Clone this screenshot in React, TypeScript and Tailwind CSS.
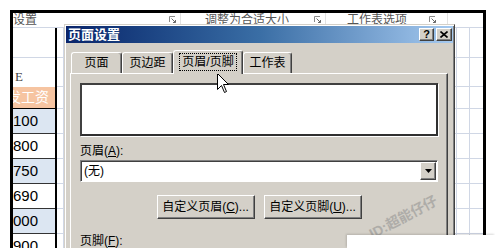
import React from "react";

// Win2000-style 3D edges
const raised =
  "border border-t-white border-l-white border-r-[#404040] border-b-[#404040] shadow-[inset_-1px_-1px_#808080]";
const sunken =
  "border border-t-[#808080] border-l-[#808080] border-r-white border-b-white shadow-[inset_1px_1px_#404040]";

const rows = [
  { v: "100", blue: true },
  { v: "800", blue: false },
  { v: "750", blue: true },
  { v: "690", blue: false },
  { v: "000", blue: true },
  { v: "900", blue: false },
];

function Launcher() {
  return (
    <svg width="8" height="8" viewBox="0 0 8 8" className="shrink-0">
      <path d="M0.5 6V0.5H6" fill="none" stroke="#8a8a8a" />
      <path d="M2.5 2.5L6.5 6.5M4 6.5H6.5V4" fill="none" stroke="#6a6a6a" />
    </svg>
  );
}

function SheetRow({
  h,
  children,
  cellClass = "",
}: {
  h: string;
  children?: React.ReactNode;
  cellClass?: string;
}) {
  return (
    <div className={`flex ${h} shrink-0`}>
      <div className={`w-[42px] overflow-hidden ${cellClass}`}>{children}</div>
      <div className="w-[2px] bg-black" />
      <div className="w-[7px] border-r border-b border-[#d0d7e5]" />
      <div className="w-[393px] border-r border-b border-[#d0d7e5]" />
      <div className="w-[13px] border-r border-b border-[#d0d7e5]" />
      <div className="flex-1 border-b border-[#d0d7e5]" />
    </div>
  );
}

function Tab({ w, children }: { w: string; children: React.ReactNode }) {
  return (
    <div
      className={`${w} h-[21px] flex items-center justify-center rounded-t-[3px] border-t border-l border-r border-t-white border-l-white border-r-[#404040] shadow-[inset_-1px_0_#808080]`}
    >
      {children}
    </div>
  );
}

export default function App() {
  return (
    <div className="relative w-[495px] h-[248px] overflow-hidden bg-white pl-[10px] pt-[10px] font-['Liberation_Sans','Noto_Sans_CJK_SC',sans-serif]">
      {/* spreadsheet behind the dialog */}
      <div className="w-[476px] h-[270px] border-[3px] border-b-0 border-black flex flex-col">
        <div className="flex h-[15px] shrink-0 border-b border-[#d0d7e5] text-[12px] leading-[14px] text-[#555]">
          <div className="w-[167px] flex items-center justify-between pr-[3px]">
            <span>设置</span>
            <Launcher />
          </div>
          <div className="w-[145px] flex items-center justify-between pl-[24px] pr-[3px] border-l border-[#e2e2e2]">
            <span>调整为合适大小</span>
            <Launcher />
          </div>
          <div className="w-[122px] flex items-center justify-between pl-[21px] pr-[10px] border-l border-[#e2e2e2]">
            <span>工作表选项</span>
            <Launcher />
          </div>
          <div className="flex-1 border-l border-[#e2e2e2]" />
        </div>
        <SheetRow h="h-[30px]" cellClass="border-b border-[#d0d7e5]" />
        <SheetRow
          h="h-[29px]"
          cellClass="flex items-end pl-[2px] pb-[1px] text-[13px] text-[#444] font-['Liberation_Serif',serif]"
        >
          E
        </SheetRow>
        <SheetRow
          h="h-[22px]"
          cellClass="bg-[#f6c4a1] flex items-center text-white text-[14px] border-b border-black"
        >
          <span className="whitespace-nowrap -ml-[6px]">发工资</span>
        </SheetRow>
        {rows.map((r) => (
          <SheetRow
            key={r.v}
            h="h-[25px]"
            cellClass={`flex items-center text-[15px] text-black border-b border-[#333] ${
              r.blue ? "bg-[#dce6f2]" : "bg-white"
            }`}
          >
            {r.v}
          </SheetRow>
        ))}
      </div>

      {/* page setup dialog (window over the sheet) */}
      <div className="absolute left-[64px] top-[24px] w-[391px] h-[240px] bg-[#d4d0c8] border border-t-[#d4d0c8] border-l-[#d4d0c8] border-r-[#404040] border-b-[#404040] shadow-[inset_1px_1px_#fff,inset_-1px_-1px_#808080] p-[1px] text-[12px] text-black">
        <div className="h-[17px] flex items-center pl-[2px] pr-[1px] bg-gradient-to-r from-[#0a246a] via-[#3a6ea5] to-[#a6caf0]">
          <span className="text-white font-bold text-[13px] leading-none">页面设置</span>
          <div className="ml-auto flex gap-[2px]">
            <div className={`w-[15px] h-[13px] bg-[#d4d0c8] flex items-center justify-center text-[11px] font-bold leading-none ${raised}`}>
              ?
            </div>
            <div className={`w-[16px] h-[13px] bg-[#d4d0c8] flex items-center justify-center ${raised}`}>
              <svg width="8" height="7" viewBox="0 0 8 7">
                <path d="M0.5 0.5L7.5 6.5M7.5 0.5L0.5 6.5" stroke="black" strokeWidth="1.6" />
              </svg>
            </div>
          </div>
        </div>

        <div className="pt-[7px] pl-[4px]">
          <div className="flex items-end h-[23px] pl-[1px]">
            <Tab w="w-[51px]">页面</Tab>
            <Tab w="w-[51px]">页边距</Tab>
            <div className="relative z-10 -mb-px w-[70px] h-[24px] pb-[2px] flex items-center justify-center rounded-t-[3px] bg-[#d4d0c8] border-t border-l border-r border-t-white border-l-white border-r-[#404040] shadow-[inset_-1px_0_#808080]">
              <span className="border border-dotted border-black px-[2px] leading-[16px]">页眉/页脚</span>
            </div>
            <Tab w="w-[49px]">工作表</Tab>
          </div>

          <div className="w-[378px] h-[200px] border-t border-l border-r border-t-white border-l-white border-r-[#404040] shadow-[inset_-1px_0_#808080] pt-[9px] pl-[9px]">
            <div className="w-[358px] h-[53px] bg-white border-2 border-t-[#404040] border-l-[#404040] border-r-[#303030] border-b-[#303030] shadow-[1px_1px_#fff]" />

            <div className="mt-[9px] h-[13px] leading-[13px]">
              页眉(<span className="underline">A</span>):
            </div>

            <div className={`mt-[2px] w-[358px] h-[22px] bg-white flex items-center ${sunken}`}>
              <span className="pl-[3px]">(无)</span>
              <div className={`ml-auto mr-[1px] w-[16px] h-[18px] bg-[#d4d0c8] flex items-center justify-center ${raised}`}>
                <svg width="7" height="4" viewBox="0 0 7 4">
                  <path d="M0 0H7L3.5 4Z" fill="black" />
                </svg>
              </div>
            </div>

            <div className="mt-[13px] w-[358px] flex justify-center gap-[9px]">
              <div className={`w-[98px] h-[24px] flex items-center justify-center ${raised}`}>
                自定义页眉(<span className="underline">C</span>)...
              </div>
              <div className={`w-[98px] h-[24px] flex items-center justify-center ${raised}`}>
                自定义页脚(<span className="underline">U</span>)...
              </div>
            </div>

            <div className="mt-[16px] h-[13px] leading-[13px]">
              页脚(<span className="underline">F</span>):
            </div>
          </div>
        </div>
      </div>

      {/* mouse pointer */}
      <svg className="absolute left-[217px] top-[73px]" width="13" height="21" viewBox="0 0 13 21">
        <path
          d="M0.5 0.5V16.5L4.5 12.5L7.5 19.5L9.5 18.5L6.5 11.5H11.5Z"
          fill="white"
          stroke="black"
          strokeLinejoin="miter"
        />
      </svg>

      {/* watermark */}
      <div className="absolute left-[366px] top-[207px] -rotate-[28deg] text-[14px] font-bold text-[#8a8a8a] opacity-50 whitespace-nowrap">
        ID:超能仔仔
      </div>

      {/* white caption strip */}
      <div className="absolute left-[347px] top-[235px] w-[148px] h-[13px] bg-white shadow-[-1px_-1px_2px_rgba(0,0,0,0.15)]" />
    </div>
  );
}
